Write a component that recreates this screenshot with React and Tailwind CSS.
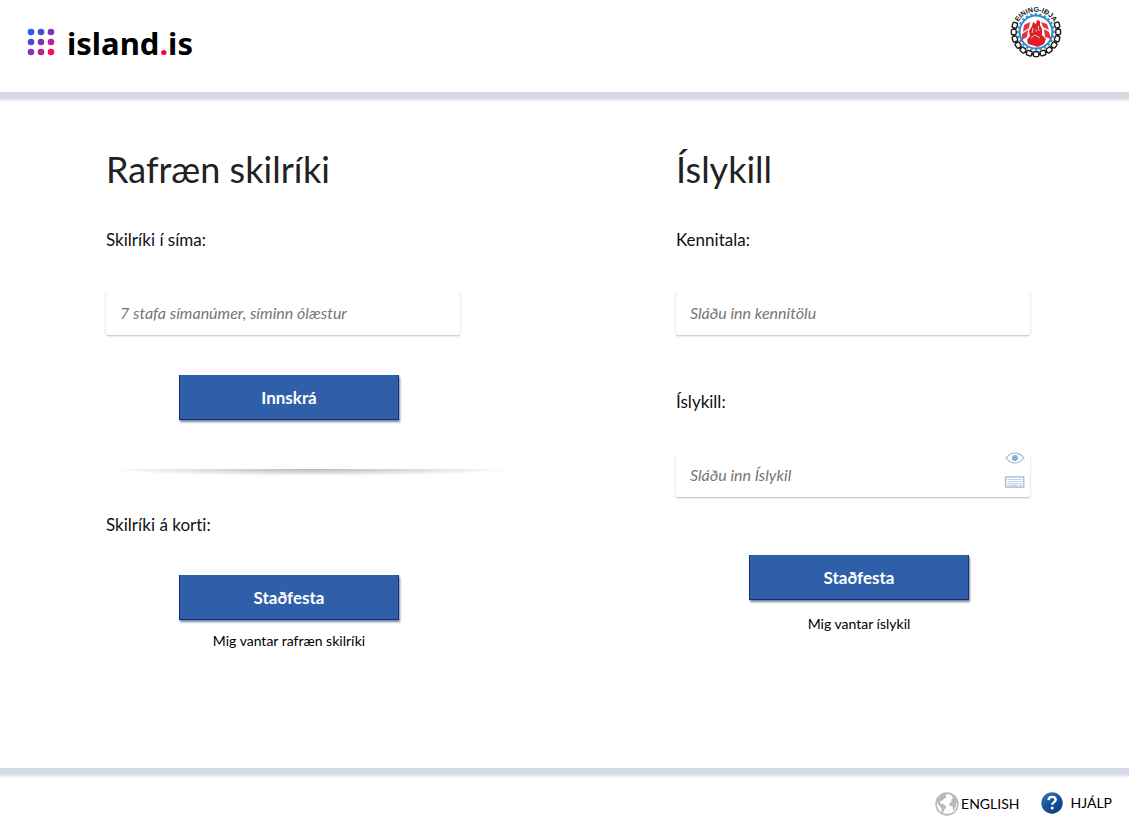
import { useState } from 'react';

const DOT_COLORS = [
  ['#1f5bf5', '#4a4bd0', '#7c35b5'],
  ['#4d4ad0', '#8a30ad', '#bb1f90'],
  ['#8038b8', '#b81f92', '#fb0a5f'],
];

// The chain leaves room at the top for the union's name
const CHAIN_LINKS = [...Array(13)].map((_, i) => -18 + i * 18);
const COG_TEETH = [...Array(24)].map((_, i) => i * 15);

function IslandLogo() {
  return (
    <a href="#island" className="flex items-center gap-3">
      <svg width="28" height="28" viewBox="0 0 28 28" aria-hidden="true">
        {DOT_COLORS.map((row, y) =>
          row.map((color, x) => (
            <circle key={`${x}-${y}`} cx={4 + x * 10} cy={4 + y * 10} r="3.3" fill={color} />
          ))
        )}
      </svg>
      <span className="pt-0.5 font-['Noto_Sans',sans-serif] text-[31px] leading-8 font-bold text-black">
        island<span className="text-[#ff0050]">.</span>is
      </span>
    </a>
  );
}

function UnionLogo() {
  return (
    <svg width="54" height="54" viewBox="0 0 54 54" role="img" aria-label="Eining-Iðja">
      <defs>
        <path id="union-arc" d="M6.8 27 A20.2 20.2 0 0 1 47.2 27" />
      </defs>
      {CHAIN_LINKS.map((a) => (
        <g key={a} transform={`rotate(${a} 27 27)`}>
          <rect x="46.8" y="24.2" width="4.8" height="5.4" rx="1.4" fill="#fff" stroke="#1b1b1b" strokeWidth="1.4" />
          {a < 198 && <path d="M49.2 29.6V32.4" stroke="#1b1b1b" strokeWidth="2" />}
        </g>
      ))}
      <circle cx="27" cy="27" r="17.4" fill="#2e8bd0" />
      {COG_TEETH.map((a) => (
        <rect key={a} x="44" y="25.8" width="1.8" height="2.2" fill="#2e8bd0" transform={`rotate(${a} 27 27)`} />
      ))}
      <circle cx="27" cy="27" r="15.4" fill="#fff" />
      {/* Flags on both sides of the group */}
      <path d="M15 20 L21 17 L20 23 L14 27Z M13 29 L19 25 L18 32 L13 35Z" fill="#e93239" />
      <path d="M32 17 L38 19 L40 25 L34 22Z M35 24 L40 27 L42 34 L36 32Z" fill="#e93239" />
      <path d="M23 21 L24 17 L27 19 L28 15 L31 16 L31 20 L33 24 L33 30 L37 34 L35 39 L29 42 L19 39 L18 35 L21 31 L20 26 Z" fill="#dc2026" />
      <path d="M24 23 L23 28 M29 21 L30 26 M22 33 L26 30 L31 33 M26 25 L28 26" fill="none" stroke="#fff" strokeWidth="0.7" />
      <text className="font-['Liberation_Sans',sans-serif] text-[7px] font-bold" fill="#111">
        <textPath href="#union-arc" startOffset="50%" textAnchor="middle">EINING-IÐJA</textPath>
      </text>
    </svg>
  );
}

function EyeIcon() {
  return (
    <svg width="20" height="12" viewBox="0 0 20 12" fill="none" aria-hidden="true">
      <path d="M1 6 Q5 1 10 1 T19 6 Q15 11 10 11 T1 6Z" stroke="#9fb5d8" strokeWidth="1.2" />
      <circle cx="10" cy="6" r="3.1" fill="#8fabd5" />
    </svg>
  );
}

function KeyboardIcon() {
  return (
    <svg width="20" height="12" viewBox="0 0 20 12" fill="none" aria-hidden="true">
      <rect x="0.6" y="0.8" width="18.2" height="10.4" rx="0.8" stroke="#9fb2d3" strokeWidth="1.2" />
      <path d="M2.5 3.5H17" stroke="#9fb2d3" strokeDasharray="1.2 0.8" />
      <path d="M2.5 5.5H17" stroke="#9fb2d3" strokeDasharray="1.2 0.8" strokeDashoffset="1" />
      <path d="M2.5 7.4H17" stroke="#9fb2d3" strokeDasharray="1.2 0.8" />
      <path d="M2.5 9.2H4M5 9.2H13M14 9.2H17" stroke="#9fb2d3" strokeWidth="0.9" />
    </svg>
  );
}

function GlobeIcon() {
  return (
    <svg width="24" height="24" viewBox="0 0 24 24" aria-hidden="true">
      <circle cx="12" cy="12" r="10.9" fill="#fff" stroke="#b9b9b9" strokeWidth="1.6" />
      <path d="M3 7 L6 3.5 L10 2 L12 2.5 L10.5 4 L11.5 5.5 L9.5 6.5 L8 8 L6 9 L4.5 10 L5.5 11.5 L8 12 L11 14 L10.5 16.5 L9 18 L8 21 L6.5 20 L6.5 16 L4 13.5 L2 10Z" fill="#b9b9b9" />
      <path d="M16 3 L19 4 L22 8 L22.5 12 L21 11 L21 14 L19 18 L18 18 L17.5 14.5 L14.5 13.5 L14.5 11 L17 9.5 L16 8 L18 6Z" fill="#b9b9b9" />
    </svg>
  );
}

function HelpIcon() {
  return (
    <svg width="22" height="22" viewBox="0 0 22 22" aria-hidden="true">
      <defs>
        <linearGradient id="help-fill" x1="0" y1="0" x2="0.6" y2="1">
          <stop offset="0" stopColor="#4379b8" />
          <stop offset="0.5" stopColor="#1b559d" />
          <stop offset="1" stopColor="#103f80" />
        </linearGradient>
      </defs>
      <circle cx="11" cy="11" r="10.7" fill="url(#help-fill)" />
      <path d="M7.5 8.2C7.7 5.8 9 4.9 11.1 4.9c2.2 0 3.6 1.1 3.6 2.8 0 2.4-3.4 2.6-3.4 5" fill="none" stroke="#fff" strokeWidth="2.3" />
      <circle cx="11.2" cy="16" r="1.5" fill="#fff" />
    </svg>
  );
}

function TextField({ id, label, children, ...props }) {
  return (
    <div className="max-w-[354px]">
      <label htmlFor={id} className="block text-[17px] leading-6">{label}</label>
      <div className="relative mt-[39px]">
        <input
          id={id}
          className="block h-11 w-full rounded-xs bg-white px-3.5 pb-0.5 text-base text-black shadow-[0_1px_2px_rgba(0,0,0,0.25)] outline-none [clip-path:inset(0_-2px_-3px_-2px)] placeholder:text-[#757575] placeholder:italic"
          {...props}
        />
        {children}
      </div>
    </div>
  );
}

function SubmitButton({ children }) {
  return (
    <button
      type="submit"
      className="h-[45px] w-[220px] cursor-pointer border border-t-0 border-[#1b2f6b] bg-[#2f5fa8] pt-0.5 text-[17px] font-bold text-white shadow-[1px_2px_2px_rgba(27,47,107,0.6)]"
    >
      {children}
    </button>
  );
}

function App() {
  const [phone, setPhone] = useState('');
  const [kennitala, setKennitala] = useState('');
  const [islykill, setIslykill] = useState('');
  const [visible, setVisible] = useState(false);

  const handleSubmit = (e) => e.preventDefault();

  return (
    <div className="flex min-h-screen flex-col bg-white font-[Lato,sans-serif] text-[#111] [font-variant-ligatures:none]">
      <header>
        <div className="flex h-[92px] items-start justify-between pr-[66px] pl-[27px]">
          <div className="pt-[25px]">
            <IslandLogo />
          </div>
          <a href="#union" className="pt-[5px]">
            <UnionLogo />
          </a>
        </div>
        <div className="h-2.5 bg-linear-to-b from-[#d3dae6] from-60% to-white" />
      </header>

      {/* Login forms */}
      <main className="grid grow grid-cols-2 gap-40 pt-[43px] pr-[43px] pl-[106px]">
        <section>
          <h1 className="text-4xl leading-12 text-[#222]">Rafræn skilríki</h1>
          <form onSubmit={handleSubmit} className="mt-[35px]">
            <TextField
              id="phone"
              type="tel"
              label="Skilríki í síma:"
              placeholder="7 stafa símanúmer, síminn ólæstur"
              value={phone}
              onChange={(e) => setPhone(e.target.value)}
            />
            <div className="mt-10 flex max-w-[366px] justify-center">
              <SubmitButton>Innskrá</SubmitButton>
            </div>
          </form>
          <div className="mt-[49px] h-[7px] bg-[radial-gradient(50%_100%_at_50%_0%,#b5b9b7,#ffffff)]" />
          <form onSubmit={handleSubmit} className="mt-[37px]">
            <p className="text-[17px] leading-6">Skilríki á korti:</p>
            <div className="mt-[38px] flex max-w-[366px] flex-col items-center gap-[11px]">
              <SubmitButton>Staðfesta</SubmitButton>
              <a href="#rafraen" className="text-sm text-black">Mig vantar rafræn skilríki</a>
            </div>
          </form>
        </section>

        <section>
          <h1 className="text-4xl leading-12 text-[#222]">Íslykill</h1>
          <form onSubmit={handleSubmit} className="mt-[35px]">
            <TextField
              id="kennitala"
              type="text"
              label="Kennitala:"
              placeholder="Sláðu inn kennitölu"
              value={kennitala}
              onChange={(e) => setKennitala(e.target.value)}
            />
            <div className="mt-[55px]">
              <TextField
                id="islykill"
                type={visible ? 'text' : 'password'}
                label="Íslykill:"
                placeholder="Sláðu inn Íslykil"
                value={islykill}
                onChange={(e) => setIslykill(e.target.value)}
              >
                <div className="absolute -top-px right-[5px] flex flex-col gap-3">
                  <button type="button" aria-label="Sýna Íslykil" onClick={() => setVisible(!visible)}>
                    <EyeIcon />
                  </button>
                  <button type="button" aria-label="Lyklaborð">
                    <KeyboardIcon />
                  </button>
                </div>
              </TextField>
            </div>
            <div className="mt-[58px] flex max-w-[366px] flex-col items-center gap-3.5">
              <SubmitButton>Staðfesta</SubmitButton>
              <a href="#panta" className="text-sm text-black">Mig vantar íslykil</a>
            </div>
          </form>
        </section>
      </main>

      <footer>
        <div className="h-2.5 bg-linear-to-b from-[#d3dae6] from-60% to-white" />
        <nav className="flex h-[62px] items-start justify-end gap-[22px] pt-3.5 pr-[17px] text-sm text-black">
          <a href="#english" className="flex items-center gap-0.5">
            <GlobeIcon />
            ENGLISH
          </a>
          <a href="#hjalp" className="flex items-center gap-[7px]">
            <HelpIcon />
            HJÁLP
          </a>
        </nav>
      </footer>
    </div>
  );
}

export default App;
